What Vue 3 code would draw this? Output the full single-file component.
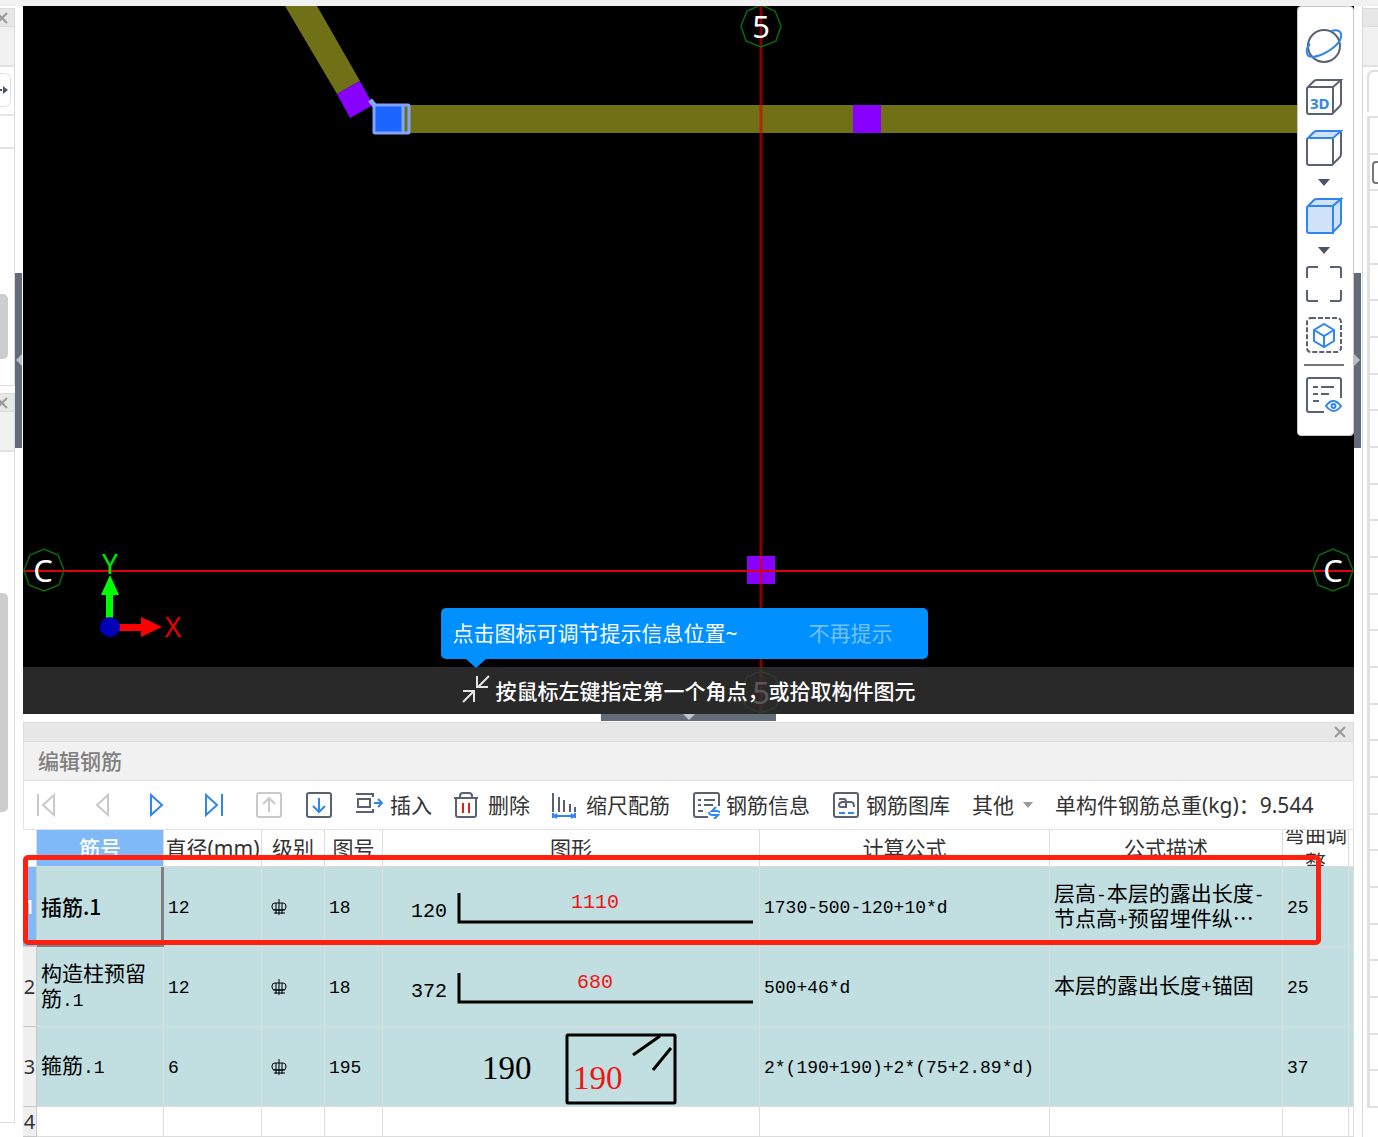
<script setup>
const cols = ['rownum', 'name', 'dia', 'grade', 'fig', 'shape', 'formula', 'desc', 'bend', 'tail']

const rows = [
  { name: '插筋.1', dia: '12', fig: '18', shape: 'hook', side: '120', len: '1110', lenX: 188, formula: '1730-500-120+10*d', desc: '层高-本层的露出长度-节点高+预留埋件纵…', bend: '25', active: true },
  { name: '构造柱预留筋.1', dia: '12', fig: '18', shape: 'hook', side: '372', len: '680', lenX: 194, formula: '500+46*d', desc: '本层的露出长度+锚固', bend: '25' },
  { name: '箍筋.1', dia: '6', fig: '195', shape: 'stirrup', side: '190', len: '190', formula: '2*(190+190)+2*(75+2.89*d)', desc: '', bend: '37' },
]

// Splits a cell text into runs so that half-width characters get the fixed-pitch face.
function runs(text) {
  return (text.match(/[\x20-\x7e]+|[^\x20-\x7e]+/g) || []).map((t) => ({ t, latin: /^[\x20-\x7e]/.test(t) }))
}

function octagon(cx, cy) {
  return [[0, -21], [14, -15], [20, 0], [15, 15], [0, 21], [-15, 15], [-20, 0], [-14, -15]]
    .map(([x, y]) => `${cx + x},${cy + y}`)
    .join(' ')
}
</script>

<template>
  <div class="app">
    <div class="topstrip"></div>

    <aside class="side left">
      <section class="dock first">
        <div class="dock-bar">
          <button class="x" aria-label="关闭"><svg width="8" height="12" viewBox="0 0 8 12"><path d="M-3 1L7 11M7 1L-3 11" /></svg></button>
        </div>
        <div class="dock-title"></div>
        <div class="dock-tool">
          <button class="stub" aria-label="展开"><svg width="9" height="10" viewBox="0 0 9 10"><path d="M0 5h2" stroke="#4a5566" stroke-width="2" /><path d="M3 1l5 4-5 4z" fill="#4a5566" /></svg></button>
        </div>
        <div class="dock-sub"></div>
        <div class="dock-body"><div class="thumb short"></div></div>
      </section>
      <section class="dock second">
        <div class="dock-bar">
          <button class="x" aria-label="关闭"><svg width="8" height="12" viewBox="0 0 8 12"><path d="M-3 1L7 11M7 1L-3 11" /></svg></button>
        </div>
        <div class="dock-title"></div>
        <div class="dock-body top"><div class="thumb long"></div></div>
      </section>
    </aside>

    <div class="gutter gl">
      <button class="handle" aria-label="收起左侧"><svg width="7" height="12" viewBox="0 0 7 12"><path d="M7 0v12L1 6z" fill="#b9bfc5" /></svg></button>
    </div>

    <main class="viewport">
      <svg class="drawing" viewBox="23 6 1331 708" preserveAspectRatio="xMidYMid slice">
        <path d="M285 6H317L360 81L337 94Z" fill="#707017" />
        <rect x="374" y="105" width="980" height="28" fill="#707017" />
        <path d="M360 81L373 105L350 118L337 94Z" fill="#8800ff" />
        <rect x="853" y="105" width="28" height="28" fill="#8800ff" />
        <rect x="747" y="556" width="28" height="28" fill="#8800ff" />
        <path d="M370 100L375 106" stroke="#86a8ff" stroke-width="5" />
        <rect x="374" y="105" width="29" height="28" fill="#1a66ff" />
        <rect x="374" y="105" width="35" height="28" rx="1" fill="none" stroke="#80a4ff" stroke-width="3" />
        <path d="M403 105V133" stroke="#80a4ff" stroke-width="3" />
        <path d="M761 6V714" stroke="#d80000" stroke-opacity=".64" stroke-width="3" />
        <path d="M23 571H1354" stroke="#dc0008" stroke-width="2" />
        <g fill="none" stroke="#0b6a0b" stroke-width="1.5">
          <polygon :points="octagon(761, 26)" />
          <polygon :points="octagon(44, 570)" />
          <polygon :points="octagon(1333, 570)" />
          <polygon :points="octagon(761, 692)" />
        </g>
        <g class="axis-label" fill="#fff">
          <text x="761" y="38">5</text>
          <text x="43" y="582">C</text>
          <text x="1333" y="582">C</text>
          <text x="761" y="704">5</text>
        </g>
        <path d="M106 627V595H101L110 575L119 595H113V627Z" fill="#0f0" />
        <path d="M110 624H141V617L162 627L141 637V631H110Z" fill="#f00" />
        <circle cx="110" cy="627" r="10" fill="#0000b8" />
        <text class="ucs" x="110" y="574" fill="#00e600">Y</text>
        <text class="ucs" x="173" y="637" fill="#e60000">X</text>
      </svg>

      <nav class="viewtools" aria-label="视图">
        <button aria-label="动态观察">
          <svg class="vi" viewBox="0 0 38 38"><circle cx="19" cy="19" r="16" /><path class="b" d="M26 4C34 2 37 5 36 10C35 16 27 23 18 27C9 31 3 31 2 26C1 23 2 20 5 17" /></svg>
        </button>
        <button aria-label="三维">
          <svg class="vi" viewBox="0 0 38 38"><path d="M4 9h23q1 0 1 1v25q0 1-1 1H4q-2 0-2-2V11q0-2 2-2zM3 9l6-6q1-1 3-1h24L28 9M36 2v23q0 2-1 3l-7 7" /><text x="5" y="31">3D</text></svg>
        </button>
        <button aria-label="俯视">
          <svg class="vi" viewBox="0 0 38 38"><path d="M2 10v24q0 2 2 2h23q1 0 1-1V10M36 3v22q0 2-1 3l-7 7" /><path class="b f" d="M3 9l6-6q1-1 3-1h24L28 9z" /></svg>
        </button>
        <button class="drop" aria-label="更多视角"><svg width="12" height="7" viewBox="0 0 12 7"><path d="M0 0h12L6 7z" fill="#4c5463" /></svg></button>
        <button aria-label="着色">
          <svg class="vi" viewBox="0 0 38 38"><path class="b f" d="M4 9h24v27H4q-2 0-2-2V11q0-2 2-2zM3 9l6-6q1-1 3-1h24L28 9" /><path class="b f" d="M28 9l8-7v23q0 2-1 3l-7 7z" /></svg>
        </button>
        <button class="drop" aria-label="更多样式"><svg width="12" height="7" viewBox="0 0 12 7"><path d="M0 0h12L6 7z" fill="#4c5463" /></svg></button>
        <button aria-label="全屏">
          <svg class="vi" viewBox="0 0 38 38"><path d="M2 13V4q0-2 2-2h9M25 2h9q2 0 2 2v9M36 25v9q0 2-2 2h-9M13 36H4q-2 0-2-2v-9" /></svg>
        </button>
        <button aria-label="选中构件">
          <svg class="vi" viewBox="0 0 38 38"><rect x="2" y="2" width="34" height="34" rx="4" stroke-dasharray="5 2" /><path class="b" d="M19 8l10 6v11l-10 6-10-6V14zM9 14l10 6 10-6M19 20v11" /></svg>
        </button>
        <hr />
        <button aria-label="显示设置">
          <svg class="vi" viewBox="0 0 38 38"><path d="M36 22V4q0-2-2-2H4Q2 2 2 4v30q0 2 2 2h15M8 11h5M16 11h13M8 18h5M16 18h8M8 25h6" /><path class="b" d="M21 30q7-10 15 0q-7 10-15 0z" /><circle class="b" cx="28.500" cy="30" r="2" /></svg>
        </button>
      </nav>

      <div class="status">
        <div class="status-in">
          <button class="move" aria-label="调节位置">
            <svg width="28" height="28" viewBox="0 0 28 28"><path d="M27 1L16 12M15 1V12H26M1 27L12 16M1 16H12V27" /></svg>
          </button>
          <span class="status-text">按鼠标左键指定第一个角点，或拾取构件图元</span>
          <div class="tip" role="tooltip">
            <span>点击图标可调节提示信息位置~</span>
            <button>不再提示</button>
          </div>
        </div>
      </div>
    </main>

    <div class="gutter gr">
      <button class="handle" aria-label="收起右侧"><svg width="7" height="12" viewBox="0 0 7 12"><path d="M0 0v12l6-6z" fill="#b9bfc5" /></svg></button>
    </div>

    <aside class="side right">
      <div class="dock-bar"></div>
      <div class="dock-title"></div>
      <div class="tab"></div>
      <div class="prop">
        <div v-for="n in 27" :key="n" class="prop-row"><input v-if="n === 2" type="checkbox" aria-label="属性" /></div>
      </div>
    </aside>

    <div class="hgutter">
      <button class="hhandle" aria-label="收起下方"><svg width="12" height="6" viewBox="0 0 12 6"><path d="M0 0h12L6 6z" fill="#c0c5ca" /></svg></button>
    </div>

    <section class="panel">
      <div class="panel-bar">
        <button class="x" aria-label="关闭"><svg width="12" height="12" viewBox="0 0 12 12"><path d="M1 1L11 11M11 1L1 11" /></svg></button>
      </div>
      <h2>编辑钢筋</h2>

      <div class="tools">
        <div class="nav">
          <button aria-label="首条" disabled><svg class="ti g" viewBox="0 0 28 28"><path d="M6 3v22M22 4v20L11 14z" /></svg></button>
          <button aria-label="上一条" disabled><svg class="ti g" viewBox="0 0 28 28"><path d="M20 4v20L9 14z" /></svg></button>
          <button aria-label="下一条"><svg class="ti b" viewBox="0 0 28 28"><path d="M7 4v20L18 14z" /></svg></button>
          <button aria-label="末条"><svg class="ti b" viewBox="0 0 28 28"><path d="M6 4v20L17 14zM22 3v22" /></svg></button>
          <button aria-label="上移" disabled><svg class="ti g" viewBox="0 0 28 28"><rect x="1" y="2" width="24" height="24" rx="2" /><path d="M13 21V8M7 13l6-6 6 6" /></svg></button>
        </div>
        <button aria-label="下移"><svg class="ti" viewBox="0 0 28 28"><rect x="1" y="2" width="24" height="24" rx="2" /><path class="b" d="M13 7v13M7 15l6 6 6-6" /></svg></button>
        <button><svg class="ti" viewBox="0 0 28 28"><path d="M0 3h17V6M0 21h17V18M2 8h12v8H2z" /><path class="b" d="M18 12h8M22 8l4 4-4 4" /></svg>插入</button>
        <button><svg class="ti" viewBox="0 0 28 28"><path d="M0 7h24M6 7V5q0-3 3-3h6q3 0 3 3v2M2 7v17q0 2 2 2h16q2 0 2-2V7" /><path class="r" d="M9 12v10M15 12v10" /></svg>删除</button>
        <button><svg class="ti" viewBox="0 0 28 28"><path d="M1 2v19M7 6v15M12 9v12M18 13v8M23 16v5" /><path class="b" d="M1 22v5M23 22v5M2 25h20M5 23l-3 2 3 2M19 23l3 2-3 2" /></svg>缩尺配筋</button>
        <button><svg class="ti" viewBox="0 0 28 28"><path d="M27 15V4q0-2-2-2H4Q2 2 2 4v20q0 2 2 2h12M6 9h3M12 9h11M6 14h3M12 14h9M6 20h5" /><path class="b" d="M24 16l-4 4h4q4 0 4 2M22 28l4-4h-5q-4 0-4-3" /></svg>钢筋信息</button>
        <button><svg class="ti" viewBox="0 0 28 28"><rect x="2" y="2" width="24" height="24" rx="2" /><path d="M7 8h5q2 0 2 3v5H9q-2 0-2-2t3-3h9q3 0 3 5" /><path class="b" d="M7 22h6M16 22h6" /></svg>钢筋图库</button>
        <button class="other">其他<svg width="10" height="6" viewBox="0 0 10 6"><path d="M0 0h10L5 6z" fill="#999" /></svg></button>
        <span class="total">单构件钢筋总重(kg)：9.544</span>
      </div>

      <div class="grid">
        <table>
          <colgroup><col v-for="c in cols" :key="c" :class="c" /></colgroup>
          <thead>
            <tr>
              <th></th>
              <th class="sel"><div>筋号</div></th>
              <th class="mm"><div>直径(mm)</div></th>
              <th><div>级别</div></th>
              <th><div>图号</div></th>
              <th><div>图形</div></th>
              <th><div>计算公式</div></th>
              <th><div>公式描述</div></th>
              <th><div>弯曲调整</div></th>
              <th></th>
            </tr>
          </thead>
          <tbody>
            <tr v-for="(r, i) in rows" :key="i" :class="{ active: r.active }">
              <th scope="row">{{ i + 1 }}</th>
              <td class="namecell"><span v-for="(p, k) in runs(r.name)" :key="k" :class="{ latin: p.latin && !r.active }">{{ p.t }}</span></td>
              <td><span class="latin">{{ r.dia }}</span></td>
              <td class="gradecell">
                <svg width="16" height="18" viewBox="0 0 16 18" role="img" aria-label="三级钢"><rect x="1" y="5" width="14" height="7" rx="3" /><path d="M8 1v16M5 5v11M11 5v11M2 12h12M3 15h11" /></svg>
              </td>
              <td><span class="latin">{{ r.fig }}</span></td>
              <td class="shapecell">
                <svg v-if="r.shape === 'hook'" width="376" height="79" viewBox="0 0 376 79">
                  <path d="M76 26V55H370" />
                  <text class="s" x="28" y="50">{{ r.side }}</text>
                  <text class="s red" :x="r.lenX" y="41">{{ r.len }}</text>
                </svg>
                <svg v-else width="376" height="79" viewBox="0 0 376 79">
                  <rect x="184" y="8" width="108" height="68" rx="1" />
                  <path d="M250 28L277 9M270 43L288 21" />
                  <text class="l" x="99" y="52">{{ r.side }}</text>
                  <text class="l red" x="190" y="62">{{ r.len }}</text>
                </svg>
              </td>
              <td><span class="latin">{{ r.formula }}</span></td>
              <td><span v-for="(p, k) in runs(r.desc)" :key="k" :class="{ latin: p.latin }">{{ p.t }}</span></td>
              <td><span class="latin">{{ r.bend }}</span></td>
              <td></td>
            </tr>
            <tr class="blank">
              <th scope="row">4</th>
              <td v-for="n in 9" :key="n"></td>
            </tr>
          </tbody>
        </table>
        <div class="mark"></div>
      </div>
    </section>
  </div>
</template>

<style>
body {
  background: #fff;
  overflow: hidden;
}
</style>

<style scoped>
* {
  box-sizing: border-box;
}
.app {
  display: grid;
  grid-template-columns: 15px 8px minmax(0, 1fr) 8px 16px;
  grid-template-rows: 6px minmax(0, 1fr) 8px auto;
  height: 100vh;
  font: 21px/28px "Noto Sans", "Noto Sans CJK SC", sans-serif;
  color: #333;
}
button {
  border: 0;
  padding: 0;
  background: none;
  font: inherit;
  color: inherit;
  display: flex;
  align-items: center;
}
svg {
  display: block;
  flex: none;
}
.topstrip {
  grid-column: 1 / -1;
  background: #f1f1f1;
}
.side {
  grid-row: 2 / 5;
  display: flex;
  flex-direction: column;
  padding-top: 2px;
  overflow: hidden;
}
.left {
  grid-column: 1;
  gap: 7px;
  padding-bottom: 14px;
}
.dock {
  display: flex;
  flex-direction: column;
  border-right: 1px solid #dcdcdc;
  border-bottom: 1px solid #dcdcdc;
}
.first {
  flex: 378 1 0;
}
.second {
  flex: 730 1 0;
}
.dock-bar {
  flex: none;
  height: 19px;
  background: #e7e7e7;
  border: 1px solid #dcdcdc;
  border-width: 1px 0;
  display: flex;
  align-items: center;
}
.x path {
  stroke: #999;
  stroke-width: 2;
}
.dock-title {
  flex: none;
  height: 40px;
  background: #f1f1f1;
  border-bottom: 2px solid #e2e2e2;
}
.dock-tool {
  height: 49px;
  padding-top: 6px;
  border-bottom: 2px solid #e6e6e6;
}
.stub {
  width: 11px;
  height: 34px;
  border: 1px solid #e2e2e2;
  border-left: 0;
  border-radius: 0 6px 6px 0;
}
.dock-sub {
  height: 33px;
  border-bottom: 2px solid #e2e2e2;
}
.dock-body {
  flex: 1;
  display: flex;
  flex-direction: column;
  justify-content: flex-end;
  padding-bottom: 26px;
}
.dock-body.top {
  justify-content: flex-start;
  padding-top: 141px;
}
.thumb {
  width: 8px;
  background: #cdcdcd;
  border-radius: 0 5px 5px 0;
}
.short {
  height: 65px;
}
.long {
  height: 219px;
}
.gutter {
  grid-row: 2;
  display: flex;
  align-items: center;
}
.gl {
  grid-column: 2;
}
.gr {
  grid-column: 4;
}
.handle {
  width: 7px;
  height: 175px;
  background: #636d78;
}
.right {
  grid-column: 5;
  border-left: 1px solid #d5d8dc;
}
.tab {
  flex: none;
  height: 42px;
  margin: 3px 0 4px 4px;
  border: 2px solid #dcdee2;
  border-width: 2px 0 0 2px;
  border-radius: 7px 0 0 0;
}
.prop {
  flex: 1;
  margin: 0 0 29px 4px;
  border-top: 2px solid #e0e0e0;
  border-left: 3px solid #e0e0e0;
  display: flex;
  flex-direction: column;
}
.prop-row {
  flex: 1;
  border-bottom: 2px solid #e0e0e0;
  display: flex;
  align-items: center;
  overflow: hidden;
  padding-left: 2px;
}
.prop-row input {
  appearance: none;
  flex: none;
  width: 22px;
  height: 23px;
  margin: 0;
  border: 2px solid #777;
  border-radius: 4px;
}
.viewport {
  grid-column: 3;
  grid-row: 2;
  position: relative;
  background: #000;
  overflow: hidden;
}
.drawing {
  width: 100%;
  height: 100%;
}
.axis-label {
  font-size: 31px;
  text-anchor: middle;
}
.ucs {
  font-size: 28px;
  text-anchor: middle;
}
.viewtools {
  position: absolute;
  top: 0;
  right: 0;
  width: 57px;
  padding: 20px 3px 21px 0;
  display: flex;
  flex-direction: column;
  align-items: center;
  gap: 13px;
  background: #fff;
  border: 1px solid #c8c8c8;
  border-radius: 4px;
}
.vi {
  width: 38px;
  height: 38px;
  fill: none;
  stroke: #596172;
  stroke-width: 2;
}
.vi text {
  font: bold 15px "Noto Sans", sans-serif;
  fill: #2f86f0;
  stroke: none;
}
.b {
  stroke: #2f86f0;
}
.f {
  fill: #d0e2fa;
}
.drop {
  height: 4px;
}
hr {
  width: 40px;
  height: 2px;
  margin: -3px 0;
  border: 0;
  background: #777;
}
.status {
  position: absolute;
  left: 0;
  right: 0;
  bottom: 0;
  height: 47px;
  display: flex;
  justify-content: center;
  background: rgba(50, 50, 50, 0.82);
}
.status-in {
  position: relative;
  display: flex;
  align-items: center;
  gap: 6px;
}
.move {
  height: 44px;
  align-self: flex-start;
}
.move path {
  fill: none;
  stroke: #e4e4e4;
  stroke-width: 2;
}
.status-text {
  color: #fff;
  font-weight: 500;
  white-space: nowrap;
}
.tip {
  position: absolute;
  left: -21px;
  bottom: 55px;
  width: 487px;
  height: 51px;
  padding: 0 35px 2px 12px;
  display: flex;
  align-items: center;
  justify-content: space-between;
  white-space: nowrap;
  color: #fff;
  background: #0090ff;
  border-radius: 5px;
}
.tip::after {
  content: "";
  position: absolute;
  left: 25px;
  top: 100%;
  border: 10px solid transparent;
  border-top: 9px solid #0090ff;
  border-bottom: 0;
}
.tip button {
  color: #73c1ff;
}
.hgutter {
  grid-column: 3;
  grid-row: 3;
  display: flex;
  justify-content: center;
}
.hhandle {
  width: 175px;
  height: 7px;
  background: #636d78;
  justify-content: center;
  align-items: flex-start;
}
.panel {
  grid-column: 3;
  grid-row: 4;
}
.panel-bar {
  height: 20px;
  padding-right: 7px;
  display: flex;
  align-items: center;
  justify-content: flex-end;
  background: #e7e7e7;
  border: 1px solid #dcdcdc;
}
h2 {
  margin: 0;
  height: 39px;
  padding-left: 14px;
  font-size: 21px;
  font-weight: 500;
  line-height: 38px;
  color: #808080;
  background: #f1f1f1;
  border: 1px solid #e2e2e2;
  border-top: 0;
}
.tools {
  height: 49px;
  padding-left: 8px;
  display: flex;
  align-items: center;
  gap: 22px;
  white-space: nowrap;
  border: 1px solid #e2e2e2;
  border-top: 0;
}
.nav {
  display: flex;
  gap: 28px;
}
.tools button {
  gap: 6px;
}
.ti {
  width: 28px;
  height: 28px;
  fill: none;
  stroke: #596172;
  stroke-width: 2;
}
.ti.g {
  stroke: #c9c9c9;
}
.ti.b {
  stroke: #2f86f0;
}
.r {
  stroke: #e02020;
}
.tools .other {
  gap: 9px;
}
.grid {
  position: relative;
}
table {
  width: 100%;
  table-layout: fixed;
  border-spacing: 0;
}
.rownum { width: 14px; }
.name { width: 127px; }
.dia { width: 98px; }
.grade { width: 63px; }
.fig { width: 58px; }
.formula { width: 290px; }
.desc { width: 233px; }
.bend { width: 66px; }
.tail { width: 5px; }
th,
td {
  padding: 0;
  font-weight: 400;
  border-right: 1px solid #dcdcdc;
  border-bottom: 1px solid #dcdcdc;
}
thead th {
  height: 37px;
}
thead div {
  height: 36px;
  display: flex;
  align-items: center;
  justify-content: center;
  text-align: center;
  overflow: hidden;
}
thead .mm div {
  white-space: nowrap;
}
thead .sel {
  color: #fff;
  font-weight: 500;
  background: #80b9f7;
}
tbody tr {
  height: 80px;
}
tbody th {
  font-size: 20px;
  background: #efefef;
  border-color: #c8c8c8;
}
tbody td {
  height: 80px;
  padding: 0 0 4px 4px;
  font-family: "Noto Sans CJK SC", sans-serif;
  line-height: 25px;
  color: #000;
  background: #c1dee0;
}
.latin {
  font-family: "Liberation Mono", monospace;
  font-size: 18px;
  line-height: 18px;
}
.active th {
  color: #fff;
  font-weight: 500;
  background: #80b9f7;
}
.active .namecell {
  padding-bottom: 0;
  font-weight: 500;
  border-right: 3px solid #808080;
  border-bottom: 2px solid #808080;
}
tbody .gradecell {
  padding: 0 0 0 9px;
}
.gradecell svg {
  fill: none;
  stroke: #000;
  stroke-width: 1;
}
tbody .shapecell {
  padding: 0;
}
.shapecell svg {
  fill: none;
  stroke: #000;
  stroke-width: 3;
}
.shapecell text {
  stroke: none;
  fill: #000;
}
.shapecell .s {
  font: 20px "Liberation Mono", monospace;
}
.shapecell .l {
  font: 33px "Liberation Serif", serif;
}
.shapecell .red {
  fill: #f01414;
}
.blank,
tbody .blank td {
  height: 30px;
  background: #fff;
}
.mark {
  position: absolute;
  top: 25px;
  left: 0;
  right: 33px;
  height: 90px;
  border: 5px solid #ff2010;
  border-radius: 5px;
  pointer-events: none;
}
</style>
